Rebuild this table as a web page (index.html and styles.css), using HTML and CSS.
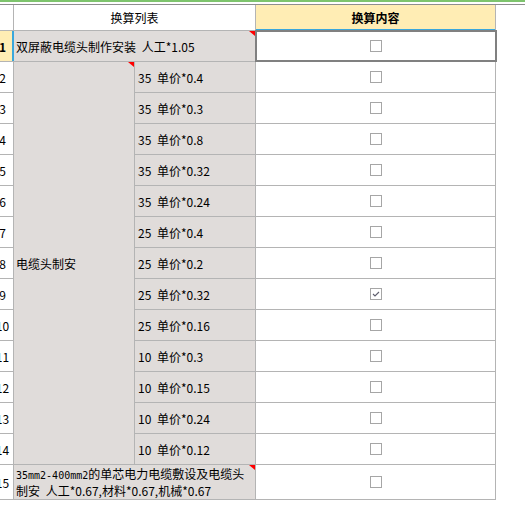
FILE: index.html
```html
<!DOCTYPE html>
<html lang="zh">
<head>
<meta charset="utf-8">
<title>换算</title>
<link rel="stylesheet" href="styles.css">
</head>
<body>
<div class="topbar"></div>
<div class="viewport">
  <div class="sheet">
    <div class="rh"></div>
    <div class="hd span2">换算列表</div>
    <div class="hd hd-sel">换算内容</div>

    <div class="rh rh-sel">1</div>
    <div class="cell span2 note">双屏蔽电缆头制作安装 人工*1.05</div>
    <div class="chk sel"><svg class="box" width="12" height="12" viewBox="0 0 12 12"><rect x="0.5" y="0.5" width="11" height="11" fill="#fff" stroke="#a6a6a6"/></svg></div>

    <div class="rh">2</div>
    <div class="cell merged note">电缆头制安</div>
    <div class="cell sub">35 单价*0.4</div>
    <div class="chk"><svg class="box" width="12" height="12" viewBox="0 0 12 12"><rect x="0.5" y="0.5" width="11" height="11" fill="#fff" stroke="#a6a6a6"/></svg></div>

    <div class="rh">3</div>
    <div class="cell sub">35 单价*0.3</div>
    <div class="chk"><svg class="box" width="12" height="12" viewBox="0 0 12 12"><rect x="0.5" y="0.5" width="11" height="11" fill="#fff" stroke="#a6a6a6"/></svg></div>

    <div class="rh">4</div>
    <div class="cell sub">35 单价*0.8</div>
    <div class="chk"><svg class="box" width="12" height="12" viewBox="0 0 12 12"><rect x="0.5" y="0.5" width="11" height="11" fill="#fff" stroke="#a6a6a6"/></svg></div>

    <div class="rh">5</div>
    <div class="cell sub">35 单价*0.32</div>
    <div class="chk"><svg class="box" width="12" height="12" viewBox="0 0 12 12"><rect x="0.5" y="0.5" width="11" height="11" fill="#fff" stroke="#a6a6a6"/></svg></div>

    <div class="rh">6</div>
    <div class="cell sub">35 单价*0.24</div>
    <div class="chk"><svg class="box" width="12" height="12" viewBox="0 0 12 12"><rect x="0.5" y="0.5" width="11" height="11" fill="#fff" stroke="#a6a6a6"/></svg></div>

    <div class="rh">7</div>
    <div class="cell sub">25 单价*0.4</div>
    <div class="chk"><svg class="box" width="12" height="12" viewBox="0 0 12 12"><rect x="0.5" y="0.5" width="11" height="11" fill="#fff" stroke="#a6a6a6"/></svg></div>

    <div class="rh">8</div>
    <div class="cell sub">25 单价*0.2</div>
    <div class="chk"><svg class="box" width="12" height="12" viewBox="0 0 12 12"><rect x="0.5" y="0.5" width="11" height="11" fill="#fff" stroke="#a6a6a6"/></svg></div>

    <div class="rh">9</div>
    <div class="cell sub">25 单价*0.32</div>
    <div class="chk"><svg class="box" width="12" height="12" viewBox="0 0 12 12"><rect x="0.5" y="0.5" width="11" height="11" fill="#fff" stroke="#a6a6a6"/><polyline points="3,6 5,8 9,4" fill="none" stroke="#5f5f6e" stroke-width="1.1"/></svg></div>

    <div class="rh">10</div>
    <div class="cell sub">25 单价*0.16</div>
    <div class="chk"><svg class="box" width="12" height="12" viewBox="0 0 12 12"><rect x="0.5" y="0.5" width="11" height="11" fill="#fff" stroke="#a6a6a6"/></svg></div>

    <div class="rh">11</div>
    <div class="cell sub">10 单价*0.3</div>
    <div class="chk"><svg class="box" width="12" height="12" viewBox="0 0 12 12"><rect x="0.5" y="0.5" width="11" height="11" fill="#fff" stroke="#a6a6a6"/></svg></div>

    <div class="rh">12</div>
    <div class="cell sub">10 单价*0.15</div>
    <div class="chk"><svg class="box" width="12" height="12" viewBox="0 0 12 12"><rect x="0.5" y="0.5" width="11" height="11" fill="#fff" stroke="#a6a6a6"/></svg></div>

    <div class="rh">13</div>
    <div class="cell sub">10 单价*0.24</div>
    <div class="chk"><svg class="box" width="12" height="12" viewBox="0 0 12 12"><rect x="0.5" y="0.5" width="11" height="11" fill="#fff" stroke="#a6a6a6"/></svg></div>

    <div class="rh">14</div>
    <div class="cell sub">10 单价*0.12</div>
    <div class="chk"><svg class="box" width="12" height="12" viewBox="0 0 12 12"><rect x="0.5" y="0.5" width="11" height="11" fill="#fff" stroke="#a6a6a6"/></svg></div>

    <div class="rh">15</div>
    <div class="cell span2 note"><span><span class="lat">35mm2-400mm2</span>的单芯电力电缆敷设及电缆头<br>制安 人工*0.67,材料*0.67,机械*0.67</span></div>
    <div class="chk"><svg class="box" width="12" height="12" viewBox="0 0 12 12"><rect x="0.5" y="0.5" width="11" height="11" fill="#fff" stroke="#a6a6a6"/></svg></div>
  </div>
</div>
</body>
</html>
```

FILE: styles.css
```css
html, body {
  margin: 0;
  padding: 0;
  background: #fff;
}

body {
  width: 525px;
  height: 517px;
  overflow: hidden;
  font-family: "Noto Sans CJK SC", "Noto Sans", sans-serif;
  font-size: 12px;
  line-height: 15px;
  color: #000;
  word-spacing: 3px;
}

.topbar {
  height: 2px;
  border-top: 2px solid #7ec46d;
  border-bottom: 1px solid #8e8e8e;
}

.viewport {
  overflow: hidden;
}

.sheet {
  display: grid;
  grid-template-columns: 21px 120px 120px 239px;
  grid-template-rows: 25px repeat(14, 30px) 34px;
  gap: 1px;
  padding: 0 1px 1px 0;
  width: max-content;
  margin-left: -8px;
  background: #b4b4b4;
}

.rh {
  background: #fff;
  display: flex;
  align-items: center;
  justify-content: center;
  word-spacing: 0;
}

.rh-sel {
  background: #ffedb4;
  font-weight: bold;
  box-shadow: inset -1px 0 0 #3aa7dc, 1px 0 0 #3aa7dc;
}

.hd {
  background: #fff;
  display: flex;
  align-items: center;
  justify-content: center;
  word-spacing: 0;
}

.hd-sel {
  background: #ffedb4;
  font-weight: bold;
  box-shadow: inset 0 -1px 0 #3aa7dc, 0 1px 0 #3aa7dc;
}

.span2 {
  grid-column: span 2;
}

.cell {
  background: #e0dcda;
  display: flex;
  align-items: center;
  padding-left: 2px;
  white-space: nowrap;
}

.cell.sub {
  padding-left: 3px;
}

.lat {
  font-family: "DejaVu Sans Mono", "Liberation Mono", monospace;
  font-size: 10px;
}

.merged {
  grid-row: span 13;
}

.note {
  position: relative;
}

.note::after {
  content: "";
  position: absolute;
  top: 0;
  right: 0;
  width: 0;
  height: 0;
  border-top: 5px solid #f00;
  border-left: 6px solid transparent;
}

.chk {
  background: #fff;
  display: flex;
  align-items: center;
  justify-content: center;
}

.chk.sel {
  position: relative;
}

.chk.sel::before {
  content: "";
  position: absolute;
  top: -1px;
  left: -1px;
  right: -2px;
  bottom: -1px;
  border: 2px solid #808080;
}

.box {
  display: block;
}
```
